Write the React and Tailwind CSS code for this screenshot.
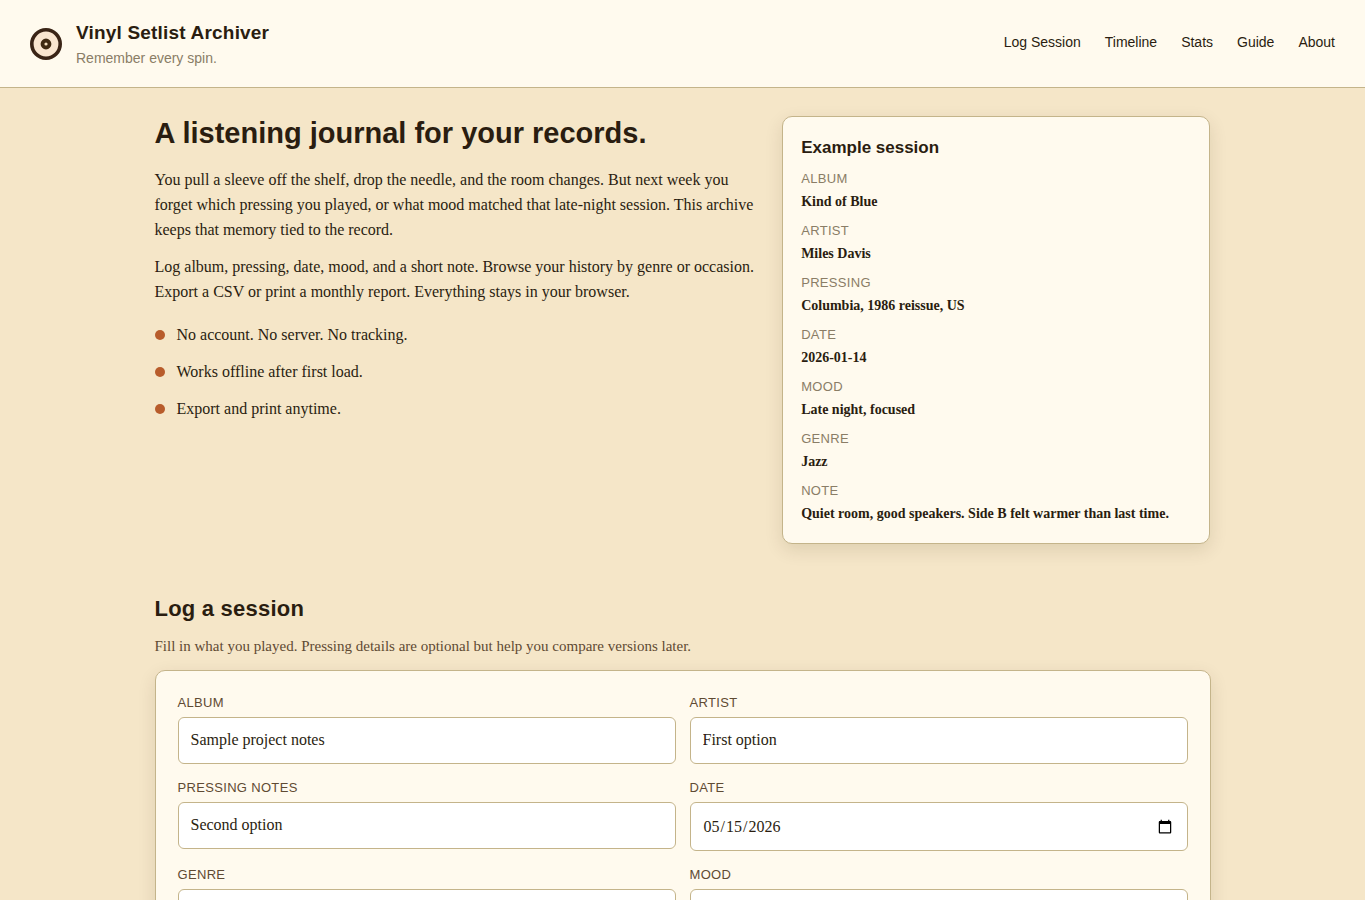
import { useState } from "react";

const navLinks = [
  { label: "Log Session", href: "#log" },
  { label: "Timeline", href: "#timeline" },
  { label: "Stats", href: "#stats" },
  { label: "Guide", href: "#guide" },
  { label: "About", href: "#about" },
];

const perks = [
  "No account. No server. No tracking.",
  "Works offline after first load.",
  "Export and print anytime.",
];

const example = [
  ["Album", "Kind of Blue"],
  ["Artist", "Miles Davis"],
  ["Pressing", "Columbia, 1986 reissue, US"],
  ["Date", "2026-01-14"],
  ["Mood", "Late night, focused"],
  ["Genre", "Jazz"],
  ["Note", "Quiet room, good speakers. Side B felt warmer than last time."],
];

const fields = [
  { name: "album", label: "Album", type: "text" },
  { name: "artist", label: "Artist", type: "text" },
  { name: "pressing", label: "Pressing notes", type: "text" },
  { name: "date", label: "Date", type: "date" },
  { name: "genre", label: "Genre", type: "text" },
  { name: "mood", label: "Mood", type: "text" },
];

const Logo = () => (
  <svg viewBox="0 0 32 32" className="size-8 shrink-0" aria-hidden="true">
    <circle cx="16" cy="16" r="14.2" fill="#fae6d0" stroke="#3a2416" strokeWidth="3.6" />
    <circle cx="16" cy="16" r="3.5" fill="#f5e0c0" stroke="#3f2a12" strokeWidth="3.8" />
  </svg>
);

const Header = () => (
  <header className="flex flex-wrap items-center justify-between gap-4 border-b border-[#c4b48a] bg-[#fffaee] px-[30px] py-[18px] font-['Liberation_Sans',Arial,sans-serif]">
    <div className="flex items-center gap-[14px]">
      <Logo />
      <div>
        <p className="text-[19px] leading-[29px] font-bold tracking-[0.01em]">
          Vinyl Setlist Archiver
        </p>
        <p className="text-sm leading-[22px] text-[#8a7d66]">
          Remember every spin.
        </p>
      </div>
    </div>
    <nav className="flex flex-wrap gap-6 text-sm">
      {navLinks.map((link) => (
        <a
          key={link.href}
          href={link.href}
          className="border-b-2 border-transparent pb-[2px] hover:border-[#b85c2b]"
        >
          {link.label}
        </a>
      ))}
    </nav>
  </header>
);

const ExampleCard = () => (
  <aside className="rounded-[10px] border border-[#c4b48a] bg-[#fffaee] p-[18px] shadow-[0_6px_18px_rgba(60,40,10,0.12)]">
    <h2 className="mb-2 font-['Liberation_Sans',Arial,sans-serif] text-[17px] leading-[26px] font-bold">
      Example session
    </h2>
    <dl className="flex flex-col gap-2">
      {example.map(([term, value]) => (
        <div key={term} className="flex flex-col gap-[2px]">
          <dt className="font-['Liberation_Sans',Arial,sans-serif] text-[13px] leading-5 tracking-wide text-[#8a7d66] uppercase">
            {term}
          </dt>
          <dd className="text-sm leading-[22px] font-bold">{value}</dd>
        </div>
      ))}
    </dl>
  </aside>
);

const App = () => {
  const [values, setValues] = useState({
    album: "Sample project notes",
    artist: "First option",
    pressing: "Second option",
    date: "2026-05-15",
    genre: "",
    mood: "",
  });

  const handleChange = (e) => {
    setValues({ ...values, [e.target.name]: e.target.value });
  };

  return (
    <div className="min-h-screen bg-[#f5e6c8] font-['Liberation_Serif','Times_New_Roman',serif] text-base text-[#2a1d10]">
      <Header />
      <main className="mx-auto max-w-[1100px] px-[22px] pt-7 pb-12">
        <section className="grid gap-7 md:grid-cols-[1.4fr_1fr]">
          <div className="leading-[25px]">
            <h1 className="mb-4 font-['Liberation_Sans',Arial,sans-serif] text-[29px] leading-[35px] font-bold">
              A listening journal for your records.
            </h1>
            <p className="mb-3">
              You pull a sleeve off the shelf, drop the needle, and the room
              changes. But next week you forget which pressing you played, or
              what mood matched that late-night session. This archive keeps that
              memory tied to the record.
            </p>
            <p>
              Log album, pressing, date, mood, and a short note. Browse your
              history by genre or occasion. Export a CSV or print a monthly
              report. Everything stays in your browser.
            </p>
            <ul className="mt-[18px] flex flex-col gap-3">
              {perks.map((perk) => (
                <li key={perk} className="flex items-center gap-3">
                  <span className="size-[10px] rounded-full bg-[#b85c2b]" />
                  {perk}
                </li>
              ))}
            </ul>
          </div>
          <ExampleCard />
        </section>

        <section id="log" className="mt-[50px]">
          <h2 className="mb-[10px] font-['Liberation_Sans',Arial,sans-serif] text-[22px] leading-[30px] font-bold tracking-[0.01em]">
            Log a session
          </h2>
          <p className="mb-3 text-[15px] leading-6 text-[#5f4a33]">
            Fill in what you played. Pressing details are optional but help you
            compare versions later.
          </p>
          <form className="grid items-start gap-[14px] rounded-[10px] border border-[#c4b48a] bg-[#fffaee] p-[22px] shadow-[0_6px_18px_rgba(60,40,10,0.12)] sm:grid-cols-2">
            {fields.map((field) => (
              <div key={field.name} className="flex flex-col gap-1">
                <label
                  htmlFor={field.name}
                  className="font-['Liberation_Sans',Arial,sans-serif] text-[13px] leading-5 tracking-wide text-[#5f4a33] uppercase"
                >
                  {field.label}
                </label>
                <input
                  id={field.name}
                  name={field.name}
                  type={field.type}
                  value={values[field.name]}
                  onChange={handleChange}
                  className={`w-full rounded-md border border-[#c4b48a] bg-white px-3 ${
                    field.type === "date" ? "h-[49px]" : "h-[47px] pb-[2px]"
                  }`}
                />
              </div>
            ))}
          </form>
        </section>
      </main>
    </div>
  );
};

export default App;
